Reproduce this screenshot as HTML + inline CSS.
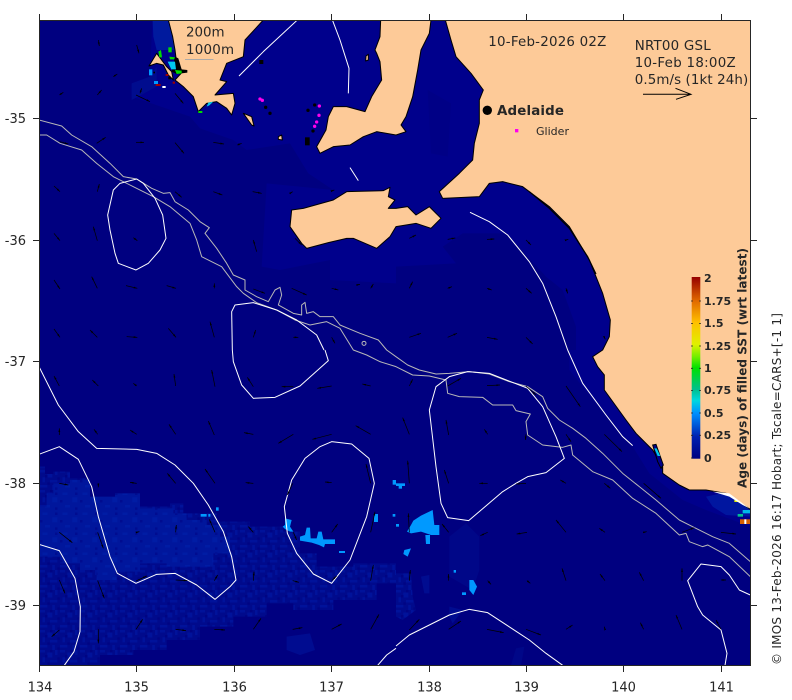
<!DOCTYPE html>
<html>
<head>
<meta charset="utf-8">
<title>SST age map</title>
<style>
html,body{margin:0;padding:0;background:#fff}
svg{display:block}
text{font-family:"DejaVu Sans","Liberation Sans",sans-serif;fill:#262626}
.ar path{fill:none;stroke:#000;stroke-width:2.2;marker-end:url(#a)}
.w{fill:none;stroke:#fff;stroke-width:3;stroke-linejoin:round}
.g{fill:none;stroke:#b8b8b8;stroke-width:3;stroke-linejoin:round}
.land{fill:#fdca98;stroke:#000;stroke-width:3;stroke-linejoin:round}
</style>
</head>
<body>
<svg width="792" height="700" viewBox="0 0 792 700" xmlns="http://www.w3.org/2000/svg">
<defs>
<clipPath id="c"><rect x="39.5" y="20.5" width="711" height="645"/></clipPath>
<marker id="a" viewBox="0 0 10 10" refX="10" refY="5" markerWidth="5" markerHeight="5" orient="auto"><path d="M0 2.5L10 5L0 7.5z" fill="#000"/></marker>
<pattern id="sp" width="60" height="60" patternUnits="userSpaceOnUse">
<rect width="60" height="60" fill="#000a8c"/>
<g fill="#00129a"><rect x="0" y="0" width="15" height="7.5"/><rect x="22" y="7.5" width="15" height="15"/><rect x="45" y="0" width="7.5" height="15"/><rect x="7.5" y="22" width="7.5" height="15"/><rect x="30" y="30" width="22" height="7.5"/><rect x="0" y="45" width="22" height="7.5"/><rect x="37" y="45" width="7.5" height="15"/></g>
<g fill="#000484"><rect x="15" y="15" width="7.5" height="7.5"/><rect x="52" y="22" width="7.5" height="7.5"/><rect x="22" y="37" width="7.5" height="7.5"/><rect x="52" y="52" width="7.5" height="7.5"/><rect x="30" y="0" width="7.5" height="7.5"/></g>
</pattern>
<pattern id="sq" width="60" height="60" patternUnits="userSpaceOnUse">
<rect width="60" height="60" fill="#00169c"/>
<g fill="#001ca4"><rect x="7.5" y="7.5" width="15" height="7.5"/><rect x="37" y="22" width="15" height="15"/><rect x="15" y="45" width="15" height="7.5"/></g>
<g fill="#000c90"><rect x="45" y="7.5" width="7.5" height="7.5"/><rect x="0" y="30" width="7.5" height="7.5"/><rect x="45" y="52" width="7.5" height="7.5"/></g>
</pattern>
<linearGradient id="cb" x1="0" y1="1" x2="0" y2="0">
<stop offset="0" stop-color="#000080"/>
<stop offset=".12" stop-color="#0020b0"/>
<stop offset=".25" stop-color="#0090ff"/>
<stop offset=".32" stop-color="#00d8e0"/>
<stop offset=".38" stop-color="#00c090"/>
<stop offset=".5" stop-color="#00e000"/>
<stop offset=".56" stop-color="#70ee00"/>
<stop offset=".63" stop-color="#e0f000"/>
<stop offset=".75" stop-color="#ffc000"/>
<stop offset=".87" stop-color="#e06800"/>
<stop offset="1" stop-color="#960000"/>
</linearGradient>
</defs>

<rect width="792" height="700" fill="#fff"/>
<g clip-path="url(#c)">
<rect x="39" y="20" width="712" height="646" fill="#000080"/>

<!-- shallow water -->
<g transform="scale(.33333)" fill="#00008c">
<polygon points="457,62 1188,62 1188,850 990,840 990,780 840,810 785,800 800,550 1000,570 925,520 870,430 740,450 700,420 600,385 570,350 395,290 395,250 450,230"/>
</g>
<g transform="translate(396 0) scale(.33333)" fill="#00008c">
<polygon points="0,60 0,800 180,790 140,740 200,700 330,700 450,830 500,870 540,980 540,1050 700,1050 1063,60"/>
<polygon points="95,270 165,310 155,470 105,460" fill="#000086"/>
</g>
<g transform="translate(396 350) scale(.33333)" fill="#00008c">
<polygon points="520,0 520,60 560,110 640,210 710,290 760,370 860,450 930,480 1063,530 1063,0"/>
<polygon points="930,440 1000,425 1063,470 1063,500 990,495 950,470" fill="#0016a0"/>
</g>

<!-- speckled zones -->
<g transform="translate(0 350) scale(.33333)">
<polygon fill="url(#sp)" points="117,350 135,350 135,372 160,372 160,365 210,365 210,385 270,385 270,445 345,445 345,430 420,430 420,470 510,470 510,460 550,460 550,490 650,490 650,515 750,515 750,530 850,530 850,545 900,545 900,610 950,610 950,650 1060,650 1060,640 1188,640 1188,700 1130,700 1130,750 1000,750 1000,780 880,780 880,760 800,760 800,800 700,800 700,830 600,830 600,870 500,870 500,900 400,900 400,915 300,915 300,946 117,946"/>
<polygon fill="url(#sq)" points="117,470 140,470 140,430 160,430 160,400 210,400 210,390 270,390 270,440 345,440 345,430 420,430 420,475 520,475 520,490 560,490 560,510 620,510 620,525 660,525 660,560 690,560 690,610 640,610 640,650 500,650 500,640 420,640 420,665 350,665 350,690 290,690 290,660 240,660 240,640 180,640 180,620 117,620"/>
<polygon fill="#000c90" points="860,860 930,850 945,900 900,915 860,900"/>
<!-- bright patches -->
<g fill="#0099ff">
<polygon points="900,560 915,555 920,533 930,533 932,565 950,565 955,545 965,545 970,568 1005,568 1005,582 975,582 972,592 957,585 935,578 900,572"/>
<polygon points="855,505 875,510 870,530 880,545 870,545 855,537 848,530 855,525"/>
<rect x="602" y="492" width="18" height="8"/><rect x="625" y="492" width="6" height="8"/><rect x="648" y="472" width="8" height="10"/><rect x="1017" y="603" width="18" height="6"/><rect x="1122" y="492" width="12" height="24"/><rect x="1178" y="390" width="10" height="14"/><rect x="1178" y="492" width="8" height="8"/>
</g>
</g>
<g transform="translate(396 350) scale(.33333)">
<polygon fill="#000788" points="160,620 160,560 210,520 250,560 250,660 230,720 160,680"/>
<polygon fill="url(#sp)" points="0,670 45,670 50,740 60,780 20,810 0,800"/>
<polygon fill="#000c90" points="75,680 100,675 100,730 85,730"/>
<polygon fill="#000c90" points="160,770 200,780 170,820 160,800"/>
<polygon fill="#000788" points="345,946 360,895 385,890 375,946"/>
<g fill="#0099ff">
<polygon points="52,512 75,497 110,480 115,525 130,525 130,555 105,555 75,545 45,550 33,545 45,525"/>
<polygon points="88,555 102,555 102,582 90,582"/>
<polygon points="25,600 45,595 35,620 22,612"/>
<polygon points="220,690 232,690 243,710 232,735 220,720"/>
<rect x="0" y="400" width="27" height="8"/><rect x="8" y="408" width="10" height="8"/><rect x="198" y="727" width="12" height="8"/><rect x="173" y="660" width="7" height="8"/><rect x="0" y="522" width="9" height="8"/>
</g>
</g>

<!-- top-left dark blue -->
<g transform="scale(.33333)">
<polygon fill="#001a9e" points="458,62 505,62 518,110 525,150 470,150 460,110"/>
<polygon fill="#000c8e" points="395,250 450,230 470,200 470,260 395,300"/>
</g>

<!-- land -->
<g transform="scale(.33333)">
<polygon class="land" points="505,60 518,110 525,150 530,190 548,215 525,240 550,260 580,290 595,335 620,310 650,305 680,325 695,345 705,310 700,280 645,285 680,245 660,240 680,190 730,170 735,120 790,60"/>
<polygon class="land" points="447,198 470,160 500,200 515,215 520,240 505,225 490,195 470,190"/>
<polygon class="land" points="730,340 755,375 762,378 755,350"/>
<polygon class="land" points="835,410 845,405 847,420 835,418"/>
<polygon class="land" points="1097,183 1098,168 1105,163 1105,180"/>
<polygon class="land" points="1142,60 1140,110 1125,150 1130,160 1140,185 1145,240 1115,290 1095,335 1040,320 1000,320 985,350 978,390 950,440 960,460 1000,440 1050,435 1090,410 1130,395 1188,405 1218,395 1203,375 1218,350 1238,290 1253,210 1263,150 1288,100 1293,60"/>
<polygon class="land" points="875,630 910,625 1000,600 1040,575 1150,572 1170,562 1165,590 1185,600 1165,625 1188,625 1223,620 1248,645 1288,620 1323,655 1293,685 1248,670 1188,680 1170,710 1130,745 1060,715 1040,715 985,728 920,745 905,730 870,680"/>
<!-- coloured coastal pixels -->
<polygon fill="#000" points="525,170 535,175 545,208 562,210 562,218 530,222 515,215"/>
<polygon fill="#00c8ee" points="503,185 525,185 528,208 514,208"/>
<polygon fill="#00dd00" points="475,155 483,150 486,172 478,172"/>
<polygon fill="#00dd00" points="525,210 545,212 545,220 530,222"/>
<polygon fill="#00dd00" points="508,170 525,172 522,178 510,178"/>
<rect x="505" y="142" width="10" height="15" fill="#00dd00"/>
<rect x="447" y="208" width="10" height="18" fill="#0099ff"/>
<rect x="462" y="243" width="12" height="9" fill="#0099ff"/>
<rect x="467" y="252" width="15" height="6" fill="#a00000"/>
<rect x="487" y="258" width="10" height="6" fill="#fff"/>
<rect x="497" y="222" width="8" height="6" fill="#a00000"/>
<rect x="518" y="245" width="7" height="6" fill="#a00000"/>
<rect x="595" y="333" width="12" height="6" fill="#00dd00"/>
<polygon fill="#00c8ee" points="620,320 625,308 640,305 628,316"/>
<g fill="#000">
<rect x="915" y="412" width="14" height="24"/><circle cx="924" cy="331" r="5"/><circle cx="944" cy="315" r="5"/><circle cx="797" cy="322" r="5"/><circle cx="810" cy="340" r="5"/><circle cx="939" cy="393" r="5"/><rect x="778" y="180" width="12" height="12"/><rect x="460" y="215" width="5" height="5"/><rect x="505" y="230" width="8" height="8"/>
</g>
<g fill="#ff00ee">
<circle cx="780" cy="297" r="5"/><circle cx="787" cy="301" r="5"/><circle cx="958" cy="318" r="5"/><circle cx="957" cy="346" r="5"/><circle cx="950" cy="366" r="5"/><circle cx="944" cy="379" r="5"/>
</g>
</g>
<g transform="translate(396 0) scale(.33333)">
<polygon class="land" points="148,60 165,120 180,170 225,220 262,270 250,300 250,370 235,430 230,480 190,520 130,575 140,595 250,590 280,550 320,545 380,560 460,620 520,680 580,780 620,880 643,960 640,1010 620,1050 590,1070 605,1100 625,1125 625,1170 690,1260 720,1300 770,1350 800,1400 800,1420 850,1455 880,1470 930,1470 990,1480 1063,1528 1066,1528 1066,60"/>
<path d="M400,575 L460,625 L520,685 L575,770 L600,822" fill="none" stroke="#000" stroke-width="3.5"/>
<polygon fill="#00008c" stroke="#000" stroke-width="3" points="770,1335 780,1333 802,1395 795,1405 785,1385"/>
<polygon fill="#00c8ee" points="775,1345 782,1345 793,1368 785,1368"/>
<rect x="1032" y="1558" width="30" height="14" fill="#d86000"/>
<rect x="1045" y="1558" width="6" height="14" fill="#fff"/>
<rect x="1025" y="1542" width="16" height="8" fill="#00c090"/>
<rect x="1040" y="1530" width="22" height="10" fill="#00b8e8"/>
<rect x="1015" y="1500" width="14" height="6" fill="#e0f000"/>
<polygon fill="#fff" points="950,1475 1000,1480 1060,1525 1040,1515 1000,1490"/>
<!-- glider legend & Adelaide -->
<rect x="357" y="387" width="10" height="10" fill="#ff00ee"/>
</g>
<!-- Adelaide dot -->
<circle cx="487.3" cy="110.3" r="4.7" fill="#000"/>

<!-- gray isobaths -->
<g transform="scale(.33333)">
<path class="g" d="M117,360L185,378L215,405L275,440L330,490L370,530L410,537L455,565L490,580L510,578L525,605L565,630L600,665L628,683L615,700L650,745L680,790L700,825L735,840L735,870L770,890L805,905L825,870L840,862L845,885L835,915L880,940L905,945L905,915L915,907L920,940L940,935L960,950L1000,950L1020,975L1080,1000L1135,1020L1160,1050L1188,1070L1223,1095L1258,1110L1308,1122L1348,1120L1408,1115L1468,1122L1528,1145L1583,1160L1628,1190L1643,1225L1678,1260L1718,1285L1758,1315L1808,1360L1868,1420L1918,1460L1968,1500L2038,1560L2078,1580L2138,1610L2188,1630L2251,1685"/>
<path class="g" d="M117,405L140,405L180,430L245,450L290,490L340,530L400,560L460,590L510,620L570,670L590,720L605,770L665,800L710,860L730,880L770,908L830,930L885,960L930,975L980,965L1020,985L1060,1050L1100,1065L1140,1085L1188,1100L1238,1125L1288,1128L1338,1140L1343,1180L1378,1190L1448,1192L1478,1215L1538,1215L1548,1232L1591,1242L1578,1265L1583,1305L1628,1335L1688,1342L1713,1335L1718,1365L1778,1415L1838,1440L1898,1495L1968,1540L2038,1605L2058,1600L2068,1625L2108,1640L2123,1635L2188,1670L2251,1730"/>
<circle class="g" cx="1092" cy="1030" r="6"/>
<!-- white contours, crop 1 -->
<path class="w" d="M717,228L790,155L890,62"/>
<path class="w" d="M998,62L1020,120L1047,205L1045,280"/>
<path class="w" d="M1050,503L1075,542"/>
<path class="w" d="M410,537L430,550L465,595L488,645L498,715L480,750L445,790L408,810L355,790L345,760L330,690L323,645L340,570L360,550Z"/>
<path class="w" d="M697,1050L695,935L705,915L760,908L830,930L890,960L950,1005L972,1050"/>
</g>
<g transform="translate(396 0) scale(.33333)">
<path class="w" d="M222,637L280,665L335,705L400,785L440,850L480,950L515,1050"/>
</g>
<g transform="translate(0 350) scale(.33333)">
<path class="w" d="M697,0L700,35L725,105L760,145L825,142L900,108L985,32L975,0"/>
<path class="w" d="M117,50L175,165L235,245L290,295L410,298L470,310L525,345L580,400L625,465L670,545L695,620L708,690L690,710L645,748L590,705L525,670L470,673L408,700L352,670L330,620L295,500L275,410L235,328L178,290L117,313"/>
<path class="w" d="M117,583L178,602L225,685L241,770L240,845L222,905L193,946"/>
<path class="w" d="M995,275L1055,282L1107,325L1123,400L1100,500L1050,630L995,700L940,672L890,610L862,550L853,470L875,390L915,325L960,290Z"/>
<path class="w" d="M1133,946L1160,915L1188,895"/>
</g>
<g transform="translate(396 350) scale(.33333)">
<path class="w" d="M515,0L560,100L630,195L680,260L710,287"/>
<path class="w" d="M0,888L40,855L160,795L220,778L275,788L400,870L450,910L500,946"/>
<path class="w" d="M120,110L160,80L215,65L280,70L395,115L440,170L480,260L505,325L450,368L395,380L360,400L320,425L218,512L155,503L135,460L120,350L100,180Z"/>
<path class="w" d="M1063,735L1030,720L1000,675L975,650L915,642L875,692L905,770L920,795L975,840L993,910L987,946"/>
</g>

<!-- quiver arrows -->
<g class="ar" transform="scale(.33333)">
<path d="M295,120L298,138"/><path d="M410,135L417,160"/><path d="M340,230L352,222"/><path d="M178,285L190,277"/><path d="M292,285L305,270"/><path d="M420,280L425,265"/><path d="M408,285L450,305"/><path d="M525,280L550,310"/><path d="M178,425L205,432"/><path d="M290,430L317,412"/><path d="M408,427L432,427"/><path d="M525,428L552,460"/><path d="M640,427L672,432"/><path d="M712,435L725,430"/><path d="M162,558L180,575"/><path d="M292,575L298,552"/><path d="M525,575L545,592"/><path d="M640,575L667,585"/><path d="M758,575L785,580"/><path d="M870,580L878,575"/><path d="M995,573L1003,570"/><path d="M162,700L180,722"/><path d="M292,722L280,680"/><path d="M400,713L412,722"/><path d="M770,755L760,720"/><path d="M885,715L905,735"/><path d="M162,840L180,867"/><path d="M292,865L275,830"/><path d="M378,857L412,865"/><path d="M500,857L528,865"/><path d="M643,865L643,850"/><path d="M760,867L795,880"/><path d="M875,865L920,885"/><path d="M995,865L1015,870"/><path d="M1070,855L1080,853"/><path d="M1112,865L1120,852"/><path d="M162,987L180,1012"/><path d="M292,1012L270,990"/><path d="M380,1010L412,1012"/><path d="M505,985L528,1012"/><path d="M643,1012L630,965"/><path d="M760,1012L767,990"/><path d="M880,1012L895,1012"/><path d="M995,1012L1005,1030"/>
</g>
<g class="ar" transform="translate(396 0) scale(.33333)">
<path d="M40,715L60,705"/><path d="M155,718L178,714"/><path d="M273,718L295,717"/><path d="M390,720L405,735"/><path d="M510,720L517,718"/><path d="M40,865L50,845"/><path d="M155,865L168,860"/><path d="M273,865L287,870"/><path d="M390,865L407,880"/><path d="M510,865L515,880"/><path d="M40,1012L75,1000"/><path d="M155,1012L183,1000"/><path d="M273,1012L305,1018"/><path d="M390,1012L410,1032"/><path d="M625,1012L628,1018"/>
</g>
<g class="ar" transform="translate(0 350) scale(.33333)">
<path d="M178,108L162,78"/><path d="M295,108L277,90"/><path d="M410,108L400,100"/><path d="M527,108L522,72"/><path d="M645,110L635,60"/><path d="M760,110L742,82"/><path d="M880,110L845,110"/><path d="M995,108L952,115"/><path d="M1112,108L1087,102"/>
<path d="M178,255L178,235"/><path d="M293,253L282,238"/><path d="M410,253L390,240"/><path d="M527,253L507,223"/><path d="M643,255L625,213"/><path d="M760,253L732,248"/><path d="M880,253L835,280"/><path d="M995,253L937,268"/><path d="M1112,253L1067,227"/>
<path d="M178,400L205,405"/><path d="M295,400L295,412"/><path d="M410,400L390,397"/><path d="M527,400L502,370"/><path d="M645,400L615,357"/><path d="M760,400L737,398"/><path d="M878,400L862,435"/><path d="M995,398L975,396"/><path d="M1112,400L1098,342"/>
<path d="M178,547L217,578"/><path d="M293,547L310,595"/><path d="M410,547L418,545"/><path d="M527,547L529,525"/><path d="M645,547L628,508"/><path d="M760,547L745,530"/><path d="M880,547L890,570"/><path d="M995,547L1013,522"/><path d="M1112,547L1125,485"/>
<path d="M178,690L195,730"/><path d="M293,692L313,745"/><path d="M408,693L440,678"/><path d="M527,690L562,692"/><path d="M643,692L653,675"/><path d="M760,692L762,665"/><path d="M878,692L897,697"/><path d="M995,692L1010,678"/><path d="M1112,692L1120,645"/>
<path d="M178,840L155,860"/><path d="M295,838L295,880"/><path d="M408,838L428,808"/><path d="M527,838L558,842"/><path d="M643,838L675,840"/><path d="M760,838L783,805"/><path d="M878,838L907,833"/><path d="M995,838L1025,822"/><path d="M1112,838L1137,793"/>
</g>
<g class="ar" transform="translate(396 350) scale(.33333)">
<path d="M40,108L50,88"/><path d="M155,108L195,85"/><path d="M273,107L312,105"/><path d="M390,108L420,135"/><path d="M510,108L553,170"/>
<path d="M40,253L20,203"/><path d="M158,255L150,210"/><path d="M275,253L265,238"/><path d="M390,253L388,270"/><path d="M510,253L525,275"/><path d="M625,253L678,305"/>
<path d="M40,400L35,332"/><path d="M158,400L145,360"/><path d="M275,400L250,400"/><path d="M390,400L360,402"/><path d="M510,400L493,390"/><path d="M625,400L643,415"/><path d="M743,400L795,445"/>
<path d="M40,547L37,490"/><path d="M158,547L138,522"/><path d="M275,547L253,557"/><path d="M393,547L362,552"/><path d="M510,547L480,510"/><path d="M627,547L610,535"/><path d="M743,547L752,545"/><path d="M858,547L895,533"/><path d="M975,547L1020,552"/>
<path d="M40,692L43,660"/><path d="M158,692L157,672"/><path d="M275,692L285,703"/><path d="M393,692L403,700"/><path d="M510,692L498,655"/><path d="M627,692L612,672"/><path d="M743,692L730,667"/><path d="M858,692L858,655"/><path d="M975,690L990,690"/>
<path d="M40,840L70,808"/><path d="M158,838L195,813"/><path d="M273,838L323,848"/><path d="M390,838L435,855"/><path d="M510,838L530,825"/><path d="M627,838L625,830"/><path d="M743,838L733,818"/><path d="M858,838L840,795"/><path d="M975,838L960,810"/>
</g>

<!-- scale line -->
<rect x="185" y="59" width="28.5" height="1" fill="#aaa"/>

<!-- reference arrow -->
<path d="M643,94.3H691M675.5,88.3L691,94.3L676,99.3" fill="none" stroke="#000" stroke-width="1"/>

<!-- colourbar -->
<rect x="691.7" y="277" width="8.6" height="181.7" fill="url(#cb)"/>
<path d="M691,301H693M691,323.5H693M691,346H693M691,368.3H693M691,390.5H693M691,413H693M691,435.3H693M691,458H693M699,301h2M699,323.5h2M699,346h2M699,368.3h2M699,390.5h2M699,413h2M699,435.3h2" stroke="#262626" stroke-width=".8" fill="none"/>
</g>

<!-- frame -->
<rect x="39.5" y="20.5" width="711" height="645" fill="none" stroke="#262626" stroke-width="1"/>
<path d="M39.5,14V20M136.5,14V20M234.5,14V20M331.5,14V20M429.5,14V20M526.5,14V20M623.5,14V20M721.5,14V20M39.5,666V672M136.5,666V672M234.5,666V672M331.5,666V672M429.5,666V672M526.5,666V672M623.5,666V672M721.5,666V672M33,118.5H39M33,240.5H39M33,361.5H39M33,483.5H39M33,605.5H39M751,118.5H757M751,240.5H757M751,361.5H757M751,483.5H757M751,605.5H757" stroke="#262626" stroke-width="1" fill="none"/>

<!-- tick labels -->
<g font-size="13">
<text x="40" y="691.7" text-anchor="middle">134</text>
<text x="136.5" y="691.7" text-anchor="middle">135</text>
<text x="234.5" y="691.7" text-anchor="middle">136</text>
<text x="331.5" y="691.7" text-anchor="middle">137</text>
<text x="429.5" y="691.7" text-anchor="middle">138</text>
<text x="526.5" y="691.7" text-anchor="middle">139</text>
<text x="623.5" y="691.7" text-anchor="middle">140</text>
<text x="721.5" y="691.7" text-anchor="middle">141</text>
<text x="26" y="123" text-anchor="end">-35</text>
<text x="26" y="245" text-anchor="end">-36</text>
<text x="26" y="366" text-anchor="end">-37</text>
<text x="26" y="488" text-anchor="end">-38</text>
<text x="26" y="610" text-anchor="end">-39</text>
</g>

<!-- annotations -->
<g font-size="13.4">
<text x="186" y="36.7" textLength="38.5">200m</text>
<text x="186" y="54" textLength="48">1000m</text>
<text x="488.3" y="46" textLength="118">10-Feb-2026 02Z</text>
<text x="634.7" y="50" textLength="76">NRT00 GSL</text>
<text x="634.7" y="67" textLength="101">10-Feb 18:00Z</text>
<text x="634.7" y="84" textLength="113.5">0.5m/s (1kt 24h)</text>
</g>
<text x="497" y="115" font-size="13.4" font-weight="bold" textLength="67" fill="#111">Adelaide</text>
<text x="536" y="134.8" font-size="11" textLength="33">Glider</text>

<!-- colourbar labels -->
<g font-size="11" font-weight="bold">
<text x="704" y="282">2</text>
<text x="704" y="305">1.75</text>
<text x="704" y="327">1.5</text>
<text x="704" y="350">1.25</text>
<text x="704" y="372">1</text>
<text x="704" y="394">0.75</text>
<text x="704" y="417">0.5</text>
<text x="704" y="439">0.25</text>
<text x="704" y="462">0</text>
</g>

<text transform="translate(746.5 488) rotate(-90)" font-size="12" font-weight="bold" textLength="240">Age (days) of filled SST (wrt latest)</text>
<text transform="translate(781 665) rotate(-90)" font-size="12" textLength="352">© IMOS 13-Feb-2026 16:17 Hobart; Tscale=CARS+[-1 1]</text>
</svg>
</body>
</html>
